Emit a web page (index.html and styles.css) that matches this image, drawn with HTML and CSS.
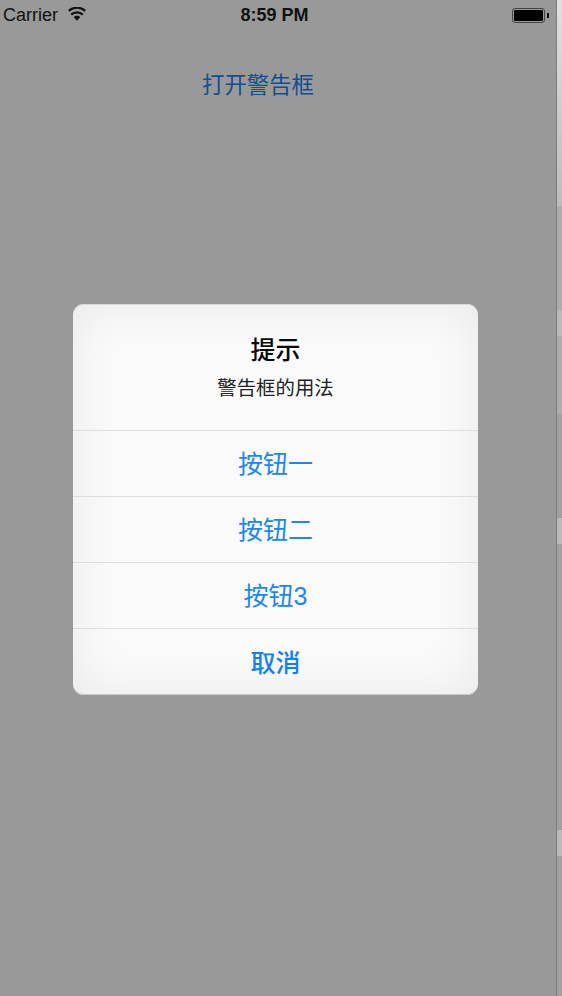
FILE: index.html
```html
<!DOCTYPE html>
<html>
<head>
  <meta charset="utf-8">
  <title>警告框</title>
  <link rel="stylesheet" href="styles.css">
</head>
<body>
  <div class="screen">
    <div class="phone">
      <div class="statusbar">
        <div class="carrier">
          <span>Carrier</span>
          <svg class="wifi" width="18" height="14" viewBox="0 0 18 14">
            <path d="M9 13.8 5.6 10a5 5 0 0 1 6.8 0Z" fill="#111"/>
            <path d="M3.2 7.6a8.6 8.6 0 0 1 11.6 0" fill="none" stroke="#111" stroke-width="2.2"/>
            <path d="M0.8 3.8a12.6 12.6 0 0 1 16.4 0" fill="none" stroke="#111" stroke-width="2.2"/>
          </svg>
        </div>
        <div class="clock">8:59 PM</div>
        <div class="battery">
          <div class="battery-body"><div class="battery-fill"></div></div>
          <div class="battery-tip"></div>
        </div>
      </div>
      <div class="open-link">打开警告框</div>
      <div class="alert-wrap">
        <div class="alert">
          <div class="alert-head">
            <div class="alert-title">提示</div>
            <div class="alert-msg">警告框的用法</div>
          </div>
          <div class="alert-btn">按钮一</div>
          <div class="alert-btn">按钮二</div>
          <div class="alert-btn">按钮3</div>
          <div class="alert-btn cancel">取消</div>
        </div>
      </div>
    </div>
    <div class="edge">
      <div class="edge-top"></div>
      <div class="edge-mid seg-104"></div>
      <div class="edge-light seg-26"></div>
      <div class="edge-mid seg-78"></div>
      <div class="edge-plain seg-104"></div>
      <div class="edge-light seg-26"></div>
      <div class="edge-plain seg-286"></div>
      <div class="edge-light seg-26"></div>
      <div class="edge-plain seg-rest"></div>
    </div>
  </div>
</body>
</html>
```

FILE: styles.css
```css
html, body {
  margin: 0;
  padding: 0;
  background: #999;
}
.screen {
  display: flex;
  width: 562px;
  height: 996px;
  overflow: hidden;
  font-family: "Liberation Sans", "Noto Sans CJK SC", sans-serif;
}
.phone {
  width: 556px;
  height: 996px;
  background: #999;
  display: flex;
  flex-direction: column;
}
.statusbar {
  height: 30px;
  display: grid;
  grid-template-columns: 1fr auto 1fr;
  align-items: center;
  padding: 0 7px 0 3px;
  color: #111;
}
.carrier {
  display: flex;
  align-items: center;
  gap: 10px;
  font-size: 18px;
}
.wifi {
  margin-top: -2px;
}
.clock {
  font-size: 18px;
  font-weight: bold;
  margin-right: 3px;
}
.battery {
  display: flex;
  align-items: center;
  justify-content: flex-end;
}
.battery-body {
  width: 29px;
  height: 11px;
  border: 1px solid #444;
  border-radius: 3px;
  padding: 1px;
}
.battery-fill {
  height: 100%;
  background: #000;
  border-radius: 1px;
}
.battery-tip {
  width: 2px;
  height: 5px;
  margin-left: 2px;
  background: #111;
}
.open-link {
  margin-top: 42px;
  margin-right: 40px;
  text-align: center;
  font-size: 22.4px;
  line-height: 28px;
  color: #0f4f93;
}
.alert-wrap {
  margin-top: 204px;
  padding-left: 73px;
}
.alert {
  width: 405px;
  height: 391px;
  border-radius: 11px;
  overflow: hidden;
  background: #fafafa;
  box-shadow: inset 0 0 50px rgba(0, 0, 0, 0.07), inset 0 -1px 0 #d4d4d4, inset 0 1px 0 #e2e2e2;
  text-align: center;
}
.alert-head {
  height: 126px;
  box-sizing: border-box;
  padding-top: 30px;
}
.alert-title {
  font-size: 25px;
  line-height: 32px;
  font-weight: 500;
  color: #0a0a0a;
}
.alert-msg {
  margin-top: 9px;
  font-size: 19.4px;
  line-height: 26px;
  color: #222;
}
.alert-btn {
  height: 65px;
  line-height: 67px;
  border-top: 1px solid #dedede;
  font-size: 25px;
  color: #1a86f8;
}
.alert-btn.cancel {
  line-height: 69px;
  font-weight: 500;
  color: #0f80f8;
}
.edge {
  width: 6px;
  height: 996px;
  border-left: 1px solid #7c7c7c;
  box-sizing: border-box;
  display: flex;
  flex-direction: column;
}
.edge-top {
  height: 206px;
  background: linear-gradient(#e0e0e0, #bcbcbc);
}
.edge-mid {
  background: #adadad;
}
.edge-light {
  background: #b9b9b9;
}
.edge-plain {
  background: #a1a1a1;
}
.seg-26 {
  height: 26px;
}
.seg-78 {
  height: 78px;
}
.seg-104 {
  height: 104px;
}
.seg-286 {
  height: 286px;
}
.seg-rest {
  flex: 1;
}
```
